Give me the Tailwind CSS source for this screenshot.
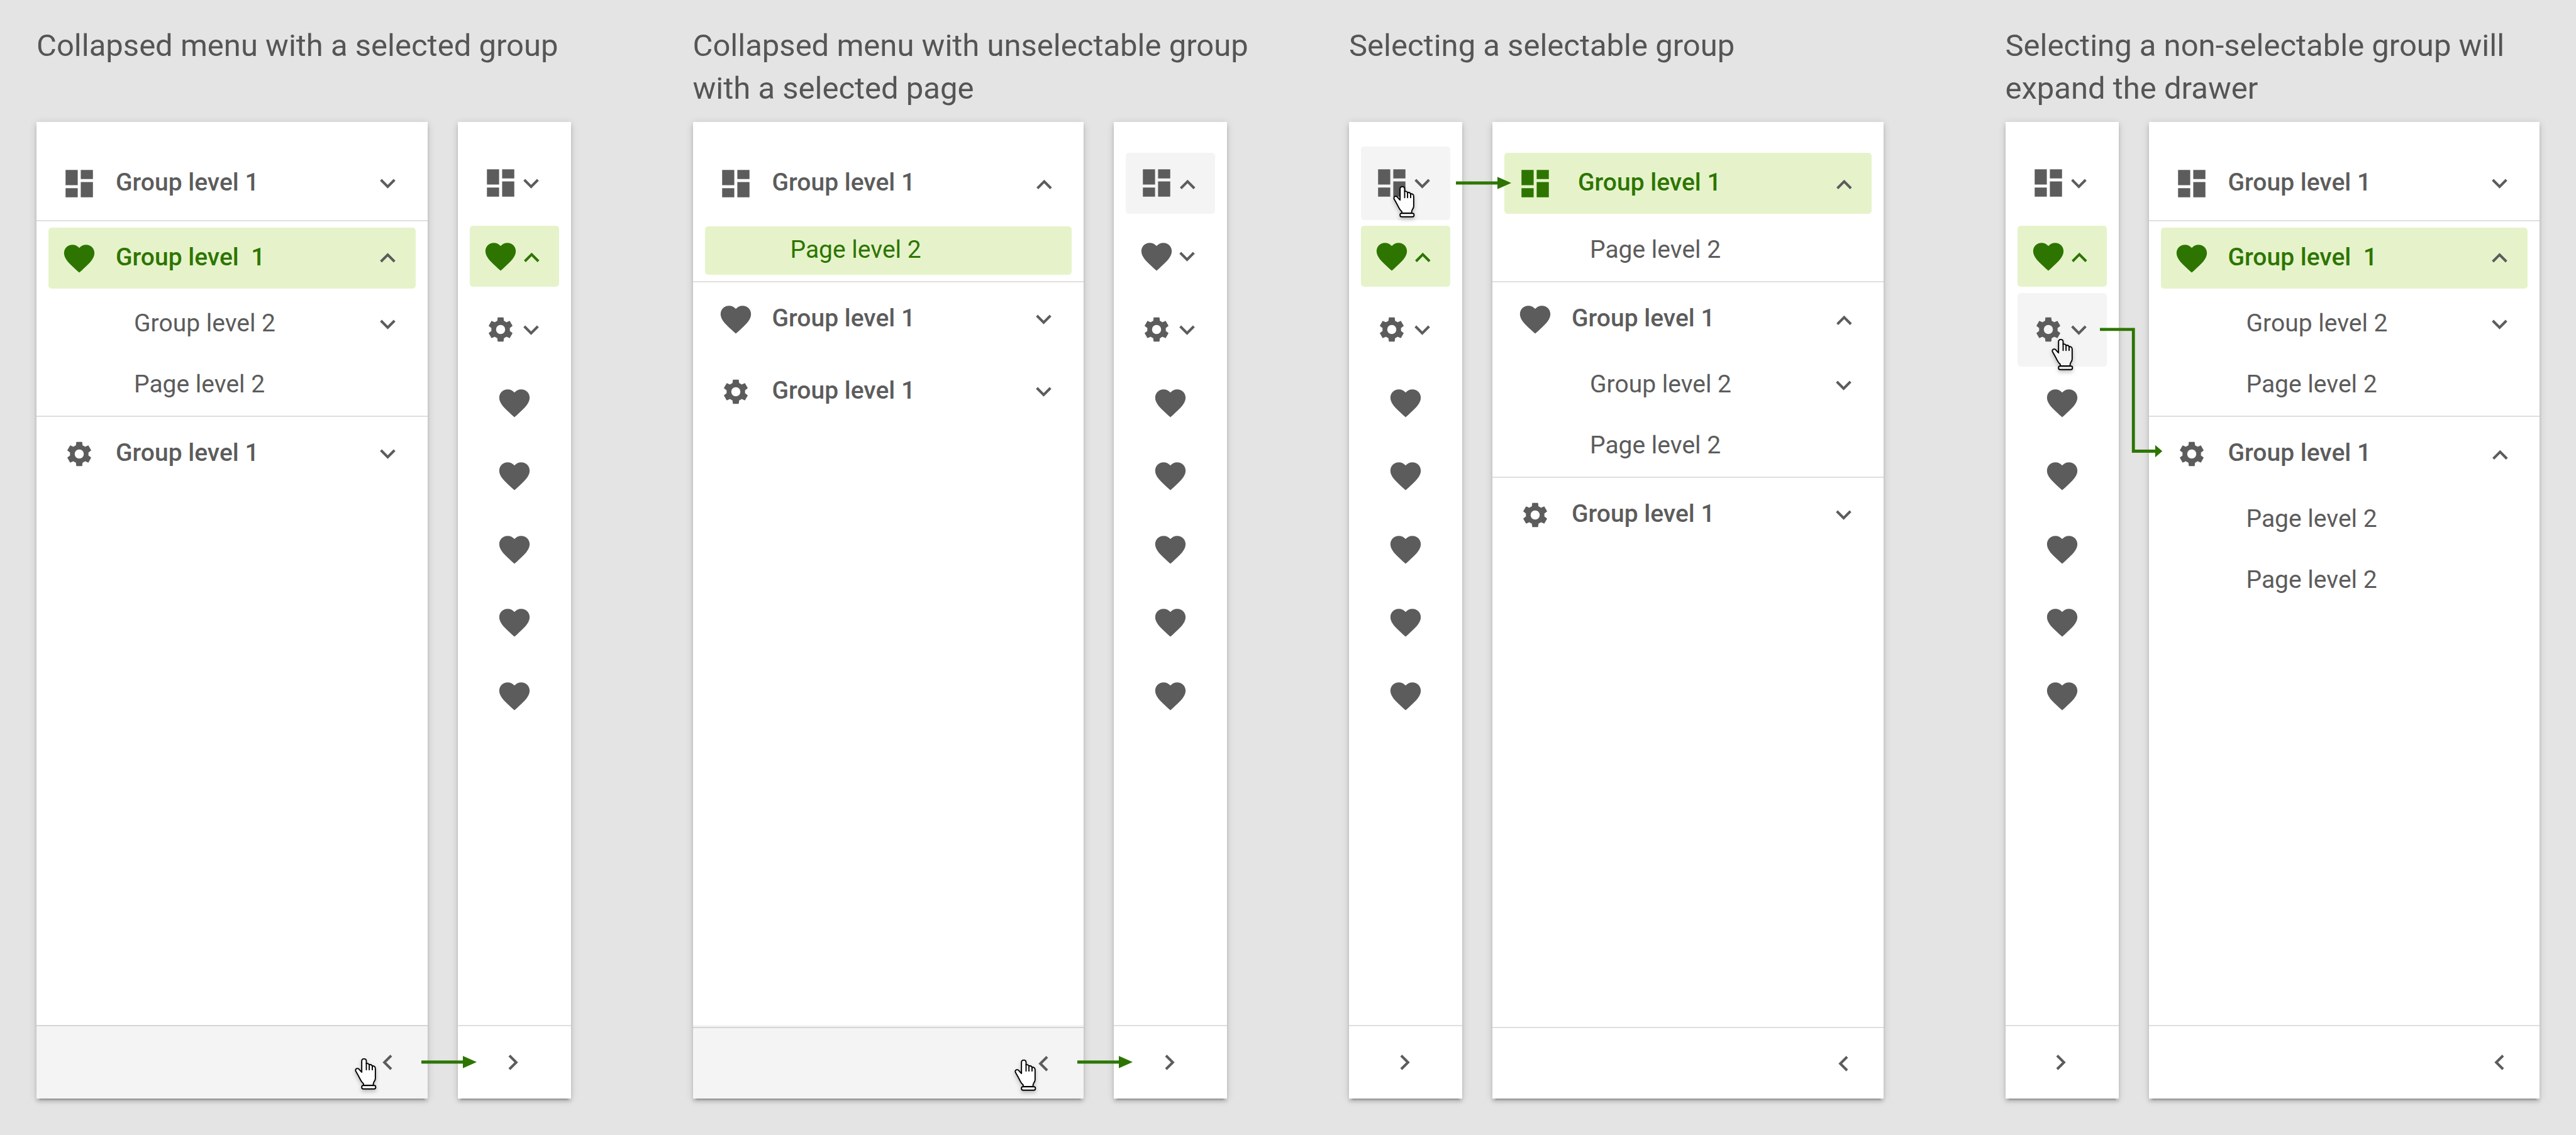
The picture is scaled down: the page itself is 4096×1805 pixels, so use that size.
<!DOCTYPE html>
<html lang="en">
<head>
<meta charset="utf-8">
<title>Navigation drawer: collapsed and expanded states</title>
<script src="https://cdn.jsdelivr.net/npm/@tailwindcss/browser@4"></script>
</head>
<body class="bg-[#e4e4e4] font-[Roboto,sans-serif] text-[39px] leading-[58px] text-[#5c5c5c]">

<!-- Icon set -->
<svg class="hidden" aria-hidden="true">
  <symbol id="dash" viewBox="0 0 24 24"><path d="M3 13h8V3H3v10zm0 8h8v-6H3v6zm10 0h8V11h-8v10zm0-18v6h8V3h-8z"/></symbol>
  <symbol id="heart" viewBox="0 0 24 24"><path d="M12 21.35l-1.45-1.32C5.4 15.36 2 12.28 2 8.5 2 5.42 4.42 3 7.5 3c1.74 0 3.41.81 4.5 2.09C13.09 3.81 14.76 3 16.5 3 19.58 3 22 5.42 22 8.5c0 3.78-3.4 6.86-8.55 11.54L12 21.35z"/></symbol>
  <symbol id="gear" viewBox="-12 -12 24 24"><path fill-rule="evenodd" d="M-2.2-5.7L-1.9-8H1.9L2.2-5.7Q3.1-5.3 3.84-4.76L5.98-5.65L7.88-2.35L6.04-.94Q6.15 0 6.04 .94L7.88 2.35L5.98 5.65L3.84 4.76Q3.1 5.3 2.2 5.7L1.9 8H-1.9L-2.2 5.7Q-3.1 5.3-3.84 4.76L-5.98 5.65L-7.88 2.35L-6.04 .94Q-6.15 0-6.04-.94L-7.88-2.35L-5.98-5.65L-3.84-4.76Q-3.1-5.3-2.2-5.7ZM0-3A3 3 0 1 0 0 3A3 3 0 1 0 0-3Z"/></symbol>
  <symbol id="down" viewBox="0 0 24 24"><path d="M7.41 8.59L12 13.17l4.59-4.58L18 10l-6 6-6-6z"/></symbol>
  <symbol id="up" viewBox="0 0 24 24"><path d="M12 8l-6 6 1.41 1.41L12 10.83l4.59 4.58L18 14z"/></symbol>
  <symbol id="up-low" viewBox="0 0 24 24"><path d="M12.4 9.2l-6 6 1.41 1.41 4.59-4.58 4.59 4.58 1.41-1.41z"/></symbol>
  <symbol id="left" viewBox="0 0 24 24"><path d="M15.41 7.41L14 6l-6 6 6 6 1.41-1.41L10.83 12z"/></symbol>
  <symbol id="right" viewBox="0 0 24 24"><path d="M8.59 16.59L10 18l6-6-6-6-1.41 1.41L13.17 12z"/></symbol>
  <symbol id="hand" viewBox="0 0 210 240">
    <g stroke="#000" stroke-width="7" stroke-linejoin="round" stroke-linecap="round">
      <path d="M88 192V182C82 176 77 172 72 162C62 142 52 124 43 109C38 98 48 90 57 94C65 98 70 108 78 115V50C78 32 105 32 105 50V64C112 62 119 65 122 71C130 69 137 72 140 79C150 77 158 82 158 93V152C158 164 147 172 146 182V192Z"/>
      <path d="M105 64V101M122 71V101M140 79V101" fill="none"/>
      <rect x="78" y="193" width="82" height="20" rx="9"/>
    </g>
  </symbol>
  <symbol id="arrow" viewBox="0 0 108 24"><path d="M0 9H81V0L108 12L81 24V15H0Z"/></symbol>
</svg>

<main class="grid min-h-screen grid-cols-4 gap-x-[194px] px-[58px] pt-[39px] pb-[58px]">

  <!-- 1: selected group -->
  <section class="relative flex flex-col">
    <h2 class="mb-[19px] min-h-[136px] text-[49px] leading-[68px] whitespace-nowrap text-[#555]">Collapsed menu with a selected group</h2>
    <div class="flex flex-1 gap-[48px]">
      <nav class="relative flex flex-1 flex-col bg-white pt-[39px] shadow-[0_7px_2px_-5px_rgba(0,0,0,0.2),0_5px_5px_rgba(0,0,0,0.14),0_2px_12px_rgba(0,0,0,0.14)]" aria-label="Drawer">
        <div class="h-[117px] px-[19px] pt-[10px]"><button class="flex h-[97px] w-full items-center rounded-[5px] px-[20px]"><svg class="mr-[29px] size-[58px] fill-current"><use href="#dash"/></svg><span class="flex-1 pb-[3px] text-left font-medium">Group level 1</span><svg class="size-[49px] fill-current"><use href="#down"/></svg></button></div>
        <div class="h-[117px] border-t-2 border-[#dfdfdf] px-[19px] pt-[10px]"><button class="flex h-[97px] w-full items-center rounded-[5px] bg-[#e6f3ca] px-[20px]"><svg class="mr-[29px] size-[58px] fill-[#2d7500]"><use href="#heart"/></svg><span class="flex-1 pb-[3px] text-left font-medium whitespace-pre text-[#2d7500]">Group level  1</span><svg class="size-[49px] fill-current"><use href="#up"/></svg></button></div>
        <div class="px-[19px] py-[10px]"><button class="flex h-[77px] w-full items-center rounded-[5px] pr-[20px] pl-[136px]"><span class="flex-1 pb-[3px] text-left">Group level 2</span><svg class="size-[49px] fill-current"><use href="#down"/></svg></button></div>
        <div class="px-[19px] py-[10px]"><a href="#" class="flex h-[77px] items-center rounded-[5px] pl-[136px]"><span class="pb-[3px]">Page level 2</span></a></div>
        <div class="h-[117px] border-t-2 border-[#dfdfdf] px-[19px] pt-[10px]"><button class="flex h-[97px] w-full items-center rounded-[5px] px-[20px]"><svg class="mr-[29px] size-[58px] fill-current"><use href="#gear"/></svg><span class="flex-1 pb-[3px] text-left font-medium">Group level 1</span><svg class="size-[49px] fill-current"><use href="#down"/></svg></button></div>
        <button class="mt-auto flex h-[117px] items-center justify-end border-t-2 border-[#d6d6d6] bg-[#f4f4f4] pr-[39px]" aria-label="Collapse"><svg class="size-[49px] fill-current"><use href="#left"/></svg></button>
        <svg class="absolute right-[69px] bottom-[8px] h-[65px] w-[57px] fill-white drop-shadow-[0_3px_3px_rgba(0,0,0,0.25)]"><use href="#hand"/></svg>
      </nav>
      <nav class="flex w-[180px] flex-col bg-white pt-[39px] shadow-[0_7px_2px_-5px_rgba(0,0,0,0.2),0_5px_5px_rgba(0,0,0,0.14),0_2px_12px_rgba(0,0,0,0.14)]" aria-label="Rail">
        <div class="grid h-[932px] grid-rows-8 items-center px-[19px]">
          <button class="flex h-[97px] items-center justify-center rounded-[5px]"><svg class="size-[58px] fill-current"><use href="#dash"/></svg><svg class="-ml-[5px] size-[49px] fill-current"><use href="#down"/></svg></button>
          <button class="flex h-[97px] items-center justify-center rounded-[5px] bg-[#e6f3ca] text-[#2d7500]"><svg class="size-[58px] fill-current"><use href="#heart"/></svg><svg class="-ml-[5px] size-[49px] fill-current"><use href="#up-low"/></svg></button>
          <button class="flex h-[97px] items-center justify-center rounded-[5px]"><svg class="size-[58px] fill-current"><use href="#gear"/></svg><svg class="-ml-[5px] size-[49px] fill-current"><use href="#down"/></svg></button>
          <button class="flex justify-center"><svg class="size-[58px] fill-current"><use href="#heart"/></svg></button>
          <button class="flex justify-center"><svg class="size-[58px] fill-current"><use href="#heart"/></svg></button>
          <button class="flex justify-center"><svg class="size-[58px] fill-current"><use href="#heart"/></svg></button>
          <button class="flex justify-center"><svg class="size-[58px] fill-current"><use href="#heart"/></svg></button>
          <button class="flex justify-center"><svg class="size-[58px] fill-current"><use href="#heart"/></svg></button>
        </div>
        <button class="mt-auto flex h-[117px] items-center justify-center border-t-2 border-[#dfdfdf] pr-1" aria-label="Expand"><svg class="size-[49px] fill-current"><use href="#right"/></svg></button>
      </nav>
    </div>
    <svg class="absolute right-[150px] bottom-[48px] h-[20px] w-[88px] fill-[#2d7500]"><use href="#arrow"/></svg>
  </section>

  <!-- 2: selected page inside an unselectable group -->
  <section class="relative flex flex-col">
    <h2 class="mb-[19px] min-h-[136px] text-[49px] leading-[68px] whitespace-nowrap text-[#555]">Collapsed menu with unselectable group<br>with a selected page</h2>
    <div class="flex flex-1 gap-[48px]">
      <nav class="relative flex flex-1 flex-col bg-white pt-[39px] shadow-[0_7px_2px_-5px_rgba(0,0,0,0.2),0_5px_5px_rgba(0,0,0,0.14),0_2px_12px_rgba(0,0,0,0.14)]" aria-label="Drawer">
        <div class="h-[117px] px-[19px] pt-[10px]"><button class="flex h-[97px] w-full items-center rounded-[5px] px-[20px]"><svg class="mr-[29px] size-[58px] fill-current"><use href="#dash"/></svg><span class="flex-1 pb-[3px] text-left font-medium">Group level 1</span><svg class="size-[49px] fill-current"><use href="#up-low"/></svg></button></div>
        <div class="px-[19px] py-[10px]"><a href="#" class="flex h-[77px] items-center rounded-[5px] bg-[#e6f3ca] pl-[136px] text-[#2d7500]"><span class="pb-[3px]">Page level 2</span></a></div>
        <div class="h-[117px] border-t-2 border-[#dfdfdf] px-[19px] pt-[10px]"><button class="flex h-[97px] w-full items-center rounded-[5px] px-[20px]"><svg class="mr-[29px] size-[58px] fill-current"><use href="#heart"/></svg><span class="flex-1 pb-[3px] text-left font-medium">Group level 1</span><svg class="size-[49px] fill-current"><use href="#down"/></svg></button></div>
        <div class="h-[117px] px-[19px] pt-[10px]"><button class="flex h-[97px] w-full items-center rounded-[5px] px-[20px]"><svg class="mr-[29px] size-[58px] fill-current"><use href="#gear"/></svg><span class="flex-1 pb-[3px] text-left font-medium">Group level 1</span><svg class="size-[49px] fill-current"><use href="#down"/></svg></button></div>
        <div class="mt-auto bg-[#f4f4f4] pt-[3px]"><button class="flex h-[114px] w-full items-center justify-end border-t-2 border-[#d6d6d6] pr-[39px]" aria-label="Collapse"><svg class="size-[49px] fill-current"><use href="#left"/></svg></button></div>
        <svg class="absolute right-[63px] bottom-[6px] h-[65px] w-[57px] fill-white drop-shadow-[0_3px_3px_rgba(0,0,0,0.25)]"><use href="#hand"/></svg>
      </nav>
      <nav class="flex w-[180px] flex-col bg-white pt-[39px] shadow-[0_7px_2px_-5px_rgba(0,0,0,0.2),0_5px_5px_rgba(0,0,0,0.14),0_2px_12px_rgba(0,0,0,0.14)]" aria-label="Rail">
        <div class="grid h-[932px] grid-rows-8 items-center px-[19px]">
          <button class="flex h-[97px] items-center justify-center rounded-[5px] bg-[#f4f4f4]"><svg class="size-[58px] fill-current"><use href="#dash"/></svg><svg class="-ml-[5px] size-[49px] fill-current"><use href="#up-low"/></svg></button>
          <button class="flex h-[97px] items-center justify-center rounded-[5px]"><svg class="size-[58px] fill-current"><use href="#heart"/></svg><svg class="-ml-[5px] size-[49px] fill-current"><use href="#down"/></svg></button>
          <button class="flex h-[97px] items-center justify-center rounded-[5px]"><svg class="size-[58px] fill-current"><use href="#gear"/></svg><svg class="-ml-[5px] size-[49px] fill-current"><use href="#down"/></svg></button>
          <button class="flex justify-center"><svg class="size-[58px] fill-current"><use href="#heart"/></svg></button>
          <button class="flex justify-center"><svg class="size-[58px] fill-current"><use href="#heart"/></svg></button>
          <button class="flex justify-center"><svg class="size-[58px] fill-current"><use href="#heart"/></svg></button>
          <button class="flex justify-center"><svg class="size-[58px] fill-current"><use href="#heart"/></svg></button>
          <button class="flex justify-center"><svg class="size-[58px] fill-current"><use href="#heart"/></svg></button>
        </div>
        <button class="mt-auto flex h-[117px] items-center justify-center border-t-2 border-[#dfdfdf] pr-1" aria-label="Expand"><svg class="size-[49px] fill-current"><use href="#right"/></svg></button>
      </nav>
    </div>
    <svg class="absolute right-[150px] bottom-[48px] h-[20px] w-[88px] fill-[#2d7500]"><use href="#arrow"/></svg>
  </section>

  <!-- 3: choosing a selectable group from the rail -->
  <section class="relative flex flex-col">
    <h2 class="mb-[19px] min-h-[136px] text-[49px] leading-[68px] whitespace-nowrap text-[#555]">Selecting a selectable group</h2>
    <div class="relative flex flex-1 gap-[48px]">
      <nav class="relative flex w-[180px] flex-col bg-white pt-[39px] shadow-[0_7px_2px_-5px_rgba(0,0,0,0.2),0_5px_5px_rgba(0,0,0,0.14),0_2px_12px_rgba(0,0,0,0.14)]" aria-label="Rail">
        <div class="grid h-[932px] grid-rows-8 items-center px-[19px]">
          <button class="flex h-full items-center justify-center rounded-[5px] bg-[#f4f4f4]"><svg class="size-[58px] fill-current"><use href="#dash"/></svg><svg class="-ml-[5px] size-[49px] fill-current"><use href="#down"/></svg></button>
          <button class="flex h-[97px] items-center justify-center rounded-[5px] bg-[#e6f3ca] text-[#2d7500]"><svg class="size-[58px] fill-current"><use href="#heart"/></svg><svg class="-ml-[5px] size-[49px] fill-current"><use href="#up-low"/></svg></button>
          <button class="flex h-[97px] items-center justify-center rounded-[5px]"><svg class="size-[58px] fill-current"><use href="#gear"/></svg><svg class="-ml-[5px] size-[49px] fill-current"><use href="#down"/></svg></button>
          <button class="flex justify-center"><svg class="size-[58px] fill-current"><use href="#heart"/></svg></button>
          <button class="flex justify-center"><svg class="size-[58px] fill-current"><use href="#heart"/></svg></button>
          <button class="flex justify-center"><svg class="size-[58px] fill-current"><use href="#heart"/></svg></button>
          <button class="flex justify-center"><svg class="size-[58px] fill-current"><use href="#heart"/></svg></button>
          <button class="flex justify-center"><svg class="size-[58px] fill-current"><use href="#heart"/></svg></button>
        </div>
        <button class="mt-auto flex h-[117px] items-center justify-center border-t-2 border-[#dfdfdf] pr-1" aria-label="Expand"><svg class="size-[49px] fill-current"><use href="#right"/></svg></button>
        <svg class="absolute top-[93px] left-[60px] h-[65px] w-[57px] fill-white drop-shadow-[0_3px_3px_rgba(0,0,0,0.25)]"><use href="#hand"/></svg>
      </nav>
      <nav class="flex flex-1 flex-col bg-white pt-[39px] shadow-[0_7px_2px_-5px_rgba(0,0,0,0.2),0_5px_5px_rgba(0,0,0,0.14),0_2px_12px_rgba(0,0,0,0.14)]" aria-label="Drawer">
        <div class="h-[117px] px-[19px] pt-[10px]"><button class="flex h-[97px] w-full items-center rounded-[5px] bg-[#e6f3ca] px-[20px]"><svg class="mr-[39px] size-[58px] fill-[#2d7500]"><use href="#dash"/></svg><span class="flex-1 pb-[3px] text-left font-medium text-[#2d7500]">Group level 1</span><svg class="size-[49px] fill-current"><use href="#up-low"/></svg></button></div>
        <div class="px-[19px] py-[10px]"><a href="#" class="flex h-[77px] items-center rounded-[5px] pl-[136px]"><span class="pb-[3px]">Page level 2</span></a></div>
        <div class="h-[117px] border-t-2 border-[#dfdfdf] px-[19px] pt-[10px]"><button class="flex h-[97px] w-full items-center rounded-[5px] px-[20px]"><svg class="mr-[29px] size-[58px] fill-current"><use href="#heart"/></svg><span class="flex-1 pb-[3px] text-left font-medium">Group level 1</span><svg class="size-[49px] fill-current"><use href="#up-low"/></svg></button></div>
        <div class="px-[19px] py-[10px]"><button class="flex h-[77px] w-full items-center rounded-[5px] pr-[20px] pl-[136px]"><span class="flex-1 pb-[3px] text-left">Group level 2</span><svg class="size-[49px] fill-current"><use href="#down"/></svg></button></div>
        <div class="px-[19px] py-[10px]"><a href="#" class="flex h-[77px] items-center rounded-[5px] pl-[136px]"><span class="pb-[3px]">Page level 2</span></a></div>
        <div class="h-[117px] border-t-2 border-[#dfdfdf] px-[19px] pt-[10px]"><button class="flex h-[97px] w-full items-center rounded-[5px] px-[20px]"><svg class="mr-[29px] size-[58px] fill-current"><use href="#gear"/></svg><span class="flex-1 pb-[3px] text-left font-medium">Group level 1</span><svg class="size-[49px] fill-current"><use href="#down"/></svg></button></div>
        <button class="mt-auto flex h-[114px] items-center justify-end border-t-2 border-[#dfdfdf] pr-[39px]" aria-label="Collapse"><svg class="size-[49px] fill-current"><use href="#left"/></svg></button>
      </nav>
      <svg class="absolute top-[87px] left-[170px] h-[20px] w-[88px] fill-[#2d7500]"><use href="#arrow"/></svg>
    </div>
  </section>

  <!-- 4: choosing a non-selectable group opens the drawer -->
  <section class="relative flex flex-col">
    <h2 class="mb-[19px] min-h-[136px] text-[49px] leading-[68px] whitespace-nowrap text-[#555]">Selecting a non-selectable group will<br>expand the drawer</h2>
    <div class="relative flex flex-1 gap-[48px]">
      <nav class="relative flex w-[180px] flex-col bg-white pt-[39px] shadow-[0_7px_2px_-5px_rgba(0,0,0,0.2),0_5px_5px_rgba(0,0,0,0.14),0_2px_12px_rgba(0,0,0,0.14)]" aria-label="Rail">
        <div class="grid h-[932px] grid-rows-8 items-center px-[19px]">
          <button class="flex h-[97px] items-center justify-center rounded-[5px]"><svg class="size-[58px] fill-current"><use href="#dash"/></svg><svg class="-ml-[5px] size-[49px] fill-current"><use href="#down"/></svg></button>
          <button class="flex h-[97px] items-center justify-center rounded-[5px] bg-[#e6f3ca] text-[#2d7500]"><svg class="size-[58px] fill-current"><use href="#heart"/></svg><svg class="-ml-[5px] size-[49px] fill-current"><use href="#up-low"/></svg></button>
          <button class="flex h-full items-center justify-center rounded-[5px] bg-[#f4f4f4]"><svg class="size-[58px] fill-current"><use href="#gear"/></svg><svg class="-ml-[5px] size-[49px] fill-current"><use href="#down"/></svg></button>
          <button class="flex justify-center"><svg class="size-[58px] fill-current"><use href="#heart"/></svg></button>
          <button class="flex justify-center"><svg class="size-[58px] fill-current"><use href="#heart"/></svg></button>
          <button class="flex justify-center"><svg class="size-[58px] fill-current"><use href="#heart"/></svg></button>
          <button class="flex justify-center"><svg class="size-[58px] fill-current"><use href="#heart"/></svg></button>
          <button class="flex justify-center"><svg class="size-[58px] fill-current"><use href="#heart"/></svg></button>
        </div>
        <button class="mt-auto flex h-[117px] items-center justify-center border-t-2 border-[#dfdfdf] pr-1" aria-label="Expand"><svg class="size-[49px] fill-current"><use href="#right"/></svg></button>
        <svg class="absolute top-[336px] left-[63px] h-[65px] w-[57px] fill-[#f4f4f4] drop-shadow-[0_3px_3px_rgba(0,0,0,0.25)]"><use href="#hand"/></svg>
      </nav>
      <nav class="flex flex-1 flex-col bg-white pt-[39px] shadow-[0_7px_2px_-5px_rgba(0,0,0,0.2),0_5px_5px_rgba(0,0,0,0.14),0_2px_12px_rgba(0,0,0,0.14)]" aria-label="Drawer">
        <div class="h-[117px] px-[19px] pt-[10px]"><button class="flex h-[97px] w-full items-center rounded-[5px] px-[20px]"><svg class="mr-[29px] size-[58px] fill-current"><use href="#dash"/></svg><span class="flex-1 pb-[3px] text-left font-medium">Group level 1</span><svg class="size-[49px] fill-current"><use href="#down"/></svg></button></div>
        <div class="h-[117px] border-t-2 border-[#dfdfdf] px-[19px] pt-[10px]"><button class="flex h-[97px] w-full items-center rounded-[5px] bg-[#e6f3ca] px-[20px]"><svg class="mr-[29px] size-[58px] fill-[#2d7500]"><use href="#heart"/></svg><span class="flex-1 pb-[3px] text-left font-medium whitespace-pre text-[#2d7500]">Group level  1</span><svg class="size-[49px] fill-current"><use href="#up"/></svg></button></div>
        <div class="px-[19px] py-[10px]"><button class="flex h-[77px] w-full items-center rounded-[5px] pr-[20px] pl-[136px]"><span class="flex-1 pb-[3px] text-left">Group level 2</span><svg class="size-[49px] fill-current"><use href="#down"/></svg></button></div>
        <div class="px-[19px] py-[10px]"><a href="#" class="flex h-[77px] items-center rounded-[5px] pl-[136px]"><span class="pb-[3px]">Page level 2</span></a></div>
        <div class="h-[117px] border-t-2 border-[#dfdfdf] px-[19px] pt-[10px]"><button class="flex h-[97px] w-full items-center rounded-[5px] px-[20px]"><svg class="mr-[29px] size-[58px] fill-current"><use href="#gear"/></svg><span class="flex-1 pb-[3px] text-left font-medium">Group level 1</span><svg class="size-[49px] fill-current"><use href="#up-low"/></svg></button></div>
        <div class="px-[19px] py-[10px]"><a href="#" class="flex h-[77px] items-center rounded-[5px] pl-[136px]"><span class="pb-[3px]">Page level 2</span></a></div>
        <div class="px-[19px] py-[10px]"><a href="#" class="flex h-[77px] items-center rounded-[5px] pl-[136px]"><span class="pb-[3px]">Page level 2</span></a></div>
        <button class="mt-auto flex h-[117px] items-center justify-end border-t-2 border-[#dfdfdf] pr-[39px]" aria-label="Collapse"><svg class="size-[49px] fill-current"><use href="#left"/></svg></button>
      </nav>
      <svg class="absolute top-[320px] left-[150px] h-[215px] w-[100px]" viewBox="0 0 124 266"><path d="M0 12H66V252H110" fill="none" stroke="#2d7500" stroke-width="6"/><path d="M109 240L123 252L109 264Z" fill="#2d7500"/></svg>
    </div>
  </section>
</main>
</body>
</html>
